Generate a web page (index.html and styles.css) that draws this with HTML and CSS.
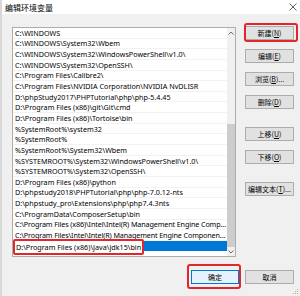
FILE: index.html
```html
<!DOCTYPE html>
<html>
<head>
<meta charset="utf-8">
<link rel="stylesheet" href="styles.css">
</head>
<body>
<div class="dialog">
  <div class="titlebar">
    <span class="title">编辑环境变量</span>
    <svg class="close" width="8" height="8" viewBox="0 0 8 8"><path d="M0.5 0.5L7.5 7.5M7.5 0.5L0.5 7.5" stroke="#333" stroke-width="0.8" fill="none"/></svg>
  </div>
  <div class="main">
    <div class="list">
      <div class="rows">
        <div class="row">C:\WINDOWS</div>
        <div class="row">C:\WINDOWS\System32\Wbem</div>
        <div class="row">C:\WINDOWS\System32\WindowsPowerShell\v1.0\</div>
        <div class="row">C:\WINDOWS\System32\OpenSSH\</div>
        <div class="row">C:\Program Files\Calibre2\</div>
        <div class="row">C:\Program Files\NVIDIA Corporation\NVIDIA NvDLISR</div>
        <div class="row">D:\phpStudy2017\PHPTutorial\php\php-5.4.45</div>
        <div class="row">D:\Program Files (x86)\git\Git\cmd</div>
        <div class="row">D:\Program Files (x86)\Tortoise\bin</div>
        <div class="row">%SystemRoot%\system32</div>
        <div class="row">%SystemRoot%</div>
        <div class="row">%SystemRoot%\System32\Wbem</div>
        <div class="row">%SYSTEMROOT%\System32\WindowsPowerShell\v1.0\</div>
        <div class="row">%SYSTEMROOT%\System32\OpenSSH\</div>
        <div class="row">D:\Program Files (x86)\python</div>
        <div class="row">D:\phpstudy2018\PHPTutorial\php\php-7.0.12-nts</div>
        <div class="row">D:\phpstudy_pro\Extensions\php\php7.4.3nts</div>
        <div class="row">C:\ProgramData\ComposerSetup\bin</div>
        <div class="row long">C:\Program Files (x86)\Intel\Intel(R) Management Engine Comp...</div>
        <div class="row long">C:\Program Files\Intel\Intel(R) Management Engine Componen...</div>
        <div class="row sel"><span class="edit">D:\Program Files (x86)\Java\jdk15\bin</span></div>
      </div>
      <div class="scrollbar">
        <div class="arrow"><svg width="6" height="4" viewBox="0 0 6 4"><path d="M0.5 3.5L3 1L5.5 3.5" stroke="#606060" stroke-width="0.9" fill="none"/></svg></div>
        <div class="track"><div class="thumb"></div></div>
        <div class="arrow"><svg width="6" height="4" viewBox="0 0 6 4"><path d="M0.5 0.5L3 3L5.5 0.5" stroke="#606060" stroke-width="0.9" fill="none"/></svg></div>
      </div>
    </div>
    <div class="side">
      <button class="btn marked-new">新建(<u>N</u>)</button>
      <button class="btn">编辑(<u>E</u>)</button>
      <button class="btn">浏览(<u>B</u>)...</button>
      <button class="btn">删除(<u>D</u>)</button>
      <button class="btn group">上移(<u>U</u>)</button>
      <button class="btn">下移(<u>O</u>)</button>
      <button class="btn group">编辑文本(<u>T</u>)...</button>
    </div>
  </div>
  <div class="footer">
    <button class="btn primary">确定</button>
    <button class="btn">取消</button>
  </div>
  <svg class="grip" width="6" height="6" viewBox="0 0 6 6"><g fill="#b0b0b0"><rect x="4" y="0" width="1" height="1"/><rect x="2" y="2" width="1" height="1"/><rect x="4" y="2" width="1" height="1"/><rect x="0" y="4" width="1" height="1"/><rect x="2" y="4" width="1" height="1"/><rect x="4" y="4" width="1" height="1"/></g></svg>
</div>
</body>
</html>
```

FILE: styles.css
```css
html, body {
  margin: 0;
  padding: 0;
}
body {
  width: 300px;
  height: 296px;
  overflow: hidden;
  background: #f0f0f0;
  font-family: "Noto Sans", "Noto Sans CJK SC", sans-serif;
  color: #000;
}
.dialog {
  position: relative;
  width: 300px;
  height: 296px;
  display: flex;
  flex-direction: column;
  border-left: 2px solid #d8d8d8;
  box-sizing: border-box;
}
.titlebar {
  height: 14px;
  background: #fff;
  display: flex;
  align-items: center;
  justify-content: space-between;
  padding: 0 3px 0 3px;
}
.title {
  font-family: "Noto Sans CJK SC", sans-serif;
  font-size: 8px;
  color: #000;
}
.close {
  display: block;
}
.main {
  display: flex;
  padding: 13px 0 0 10px;
  gap: 9px;
}
.list {
  width: 224px;
  height: 230px;
  box-sizing: border-box;
  border: 1px solid #adadad;
  background: #fff;
  display: flex;
}
.rows {
  flex: 1;
  min-width: 0;
  display: flex;
  flex-direction: column;
  overflow: hidden;
}
.row {
  height: 10.65px;
  flex: none;
  display: flex;
  align-items: center;
  padding-left: 2px;
  padding-right: 4px;
  font-size: 7.2px;
  white-space: nowrap;
  overflow: visible;
  border-bottom: 1px solid #f2f2f2;
  box-sizing: border-box;
}
.row.long {
  letter-spacing: -0.12px;
}
.row.sel {
  background: #0078d7;
  border-bottom: none;
  padding-left: 0;
  align-items: flex-start;
}
.edit {
  display: flex;
  align-items: center;
  box-sizing: border-box;
  height: 16px;
  width: 131px;
  margin-top: -2px;
  margin-left: 0;
  padding-left: 1px;
  background: #fff;
  border: 2px solid #e3262a;
  border-radius: 2px;
}
.scrollbar {
  width: 8px;
  flex: none;
  background: #f0f0f0;
  display: flex;
  flex-direction: column;
}
.arrow {
  height: 9px;
  display: flex;
  align-items: center;
  justify-content: center;
}
.track {
  flex: 1;
  display: flex;
  flex-direction: column;
  justify-content: flex-end;
}
.thumb {
  height: 123px;
  background: #cdcdcd;
}
.side {
  display: flex;
  flex-direction: column;
  gap: 9px;
  margin-top: -1px;
  width: 49px;
}
.btn {
  position: relative;
  box-sizing: border-box;
  height: 14px;
  width: 49px;
  margin: 0;
  padding: 0;
  border: 1px solid #adadad;
  background: #e1e1e1;
  font-family: "Noto Sans CJK SC", sans-serif;
  font-size: 7px;
  line-height: 12px;
  color: #000;
  text-align: center;
}
.btn u {
  text-decoration-thickness: 0.5px;
}
.btn.group {
  margin-top: 9px;
}
.marked-new::after {
  content: "";
  position: absolute;
  top: -4px;
  left: -2px;
  right: -5px;
  bottom: -3px;
  border: 2px solid #e3262a;
  border-radius: 3px;
}
.footer {
  display: flex;
  justify-content: flex-end;
  gap: 6px;
  padding-right: 6px;
  margin-top: 13px;
}
.btn.primary {
  width: 48px;
  background: #e5f1fb;
  border-color: #0078d7;
}
.btn.primary::after {
  content: "";
  position: absolute;
  top: -7px;
  left: -5px;
  right: -3px;
  bottom: -6px;
  border: 2px solid #e3262a;
  border-radius: 3px;
}
.grip {
  position: absolute;
  right: 1px;
  bottom: 1px;
}
```
